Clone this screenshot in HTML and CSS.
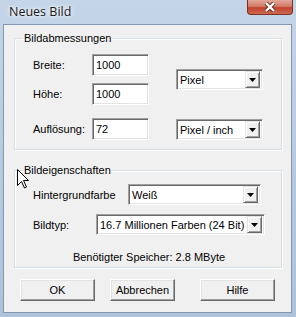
FILE: index.html
```html
<!DOCTYPE html>
<html lang="de">
<head>
    <meta charset="UTF-8">
    <title>Neues Bild</title>
    <link rel="stylesheet" href="styles.css">
</head>
<body>

<div class="titlebar">
    <span class="title">Neues Bild</span>
    <div class="close">
        <svg width="12" height="10" viewBox="0 0 12 10">
            <path d="M2 1 L10 9 M10 1 L2 9" stroke="#5a2a22" stroke-width="4"/>
            <path d="M2 1 L10 9 M10 1 L2 9" stroke="#fff" stroke-width="2.4"/>
        </svg>
    </div>
</div>

<div class="client">
    <fieldset class="group dims">
        <legend>Bildabmessungen</legend>
        <div class="block">
            <div class="pairs">
                <label>Breite:</label>
                <div class="field">1000</div>
                <label>Höhe:</label>
                <div class="field">1000</div>
            </div>
            <div class="combo unit">
                <span class="combo-text">Pixel</span>
                <span class="combo-btn"><svg width="7" height="4"><polygon points="0,0 7,0 3.5,4" fill="#000"/></svg></span>
            </div>
        </div>
        <div class="block last">
            <div class="pairs">
                <label>Auflösung:</label>
                <div class="field">72</div>
            </div>
            <div class="combo unit">
                <span class="combo-text">Pixel / inch</span>
                <span class="combo-btn"><svg width="7" height="4"><polygon points="0,0 7,0 3.5,4" fill="#000"/></svg></span>
            </div>
        </div>
    </fieldset>

    <fieldset class="group props">
        <legend>Bildeigenschaften</legend>
        <div class="row">
            <label>Hintergrundfarbe</label>
            <div class="combo color">
                <span class="combo-text">Weiß</span>
                <span class="combo-btn"><svg width="7" height="4"><polygon points="0,0 7,0 3.5,4" fill="#000"/></svg></span>
            </div>
        </div>
        <div class="row">
            <label>Bildtyp:</label>
            <div class="combo type">
                <span class="combo-text">16.7 Millionen Farben (24 Bit)</span>
                <span class="combo-btn"><svg width="7" height="4"><polygon points="0,0 7,0 3.5,4" fill="#000"/></svg></span>
            </div>
        </div>
        <p class="memory">Benötigter Speicher: 2.8 MByte</p>
    </fieldset>

    <div class="buttons">
        <button class="btn">OK</button>
        <button class="btn narrow">Abbrechen</button>
        <button class="btn">Hilfe</button>
    </div>

    <!-- Mauszeiger -->
    <svg class="cursor" width="13" height="20" viewBox="0 0 13 20">
        <polygon points="0.5,0.5 0.5,16.5 4.5,12.5 7.5,19 9.5,18 6.5,11.5 11.5,11.5" fill="#fff" stroke="#000" stroke-width="1"/>
    </svg>
</div>

</body>
</html>
```

FILE: styles.css
```css
body {
    margin: 0;
    width: 296px;
    height: 317px;
    overflow: hidden;
    font-family: "Liberation Sans", Arial, sans-serif;
    font-size: 11px;
    color: #000;
    background: linear-gradient(to bottom, #c4d5e8, #b4c8de 60%, #aec3da);
}
.titlebar {
    height: 24px;
    display: flex;
    align-items: flex-start;
}
.title {
    padding-left: 9px;
    line-height: 23px;
    font-family: "Open Sans", "Noto Sans", sans-serif;
    font-size: 12.5px;
    color: #1a1a1a;
    text-shadow: 0 0 6px #fff, 0 0 3px #fff;
}
.close {
    margin-left: auto;
    margin-right: 3px;
    width: 46px;
    height: 15px;
    box-sizing: border-box;
    border: 1px solid #7c3026;
    border-top: none;
    border-radius: 0 0 4px 4px;
    background: linear-gradient(to bottom, #e4a898, #d27a66 45%, #c2422e 55%, #cd6a4f);
    display: flex;
    align-items: center;
    justify-content: center;
}
.client {
    position: relative;
    margin-left: 3px;
    width: 289px;
    height: 289px;
    box-sizing: border-box;
    border: 1px solid #8497ad;
    background-color: #f0f0f0;
    padding-top: 7px;
}
.group {
    margin: 0 0 0 10px;
    width: 268px;
    box-sizing: border-box;
    border: 1px solid #d5dfe5;
    box-shadow: inset 1px 1px #fff, 1px 1px #fff;
    padding: 0 16px 0 18px;
}
.group legend {
    margin-left: -10px;
    padding: 0 1px;
    line-height: 13px;
}
.dims {
    height: 118px;
    padding-top: 9px;
}
.block {
    display: flex;
    align-items: center;
}
.block.last {
    margin-top: 13px;
    align-items: flex-end;
}
.pairs {
    display: grid;
    grid-template-columns: 59px 57px;
    row-gap: 7px;
    align-items: center;
}
.field {
    height: 22px;
    box-sizing: border-box;
    border: 1px solid;
    border-color: #a0a0a0 #fff #fff #a0a0a0;
    box-shadow: inset 1px 1px #696969, inset -1px -1px #e3e3e3;
    background-color: #fff;
    padding: 2px 0 0 3px;
    line-height: 16px;
}
.combo {
    height: 21px;
    box-sizing: border-box;
    border: 1px solid;
    border-color: #a0a0a0 #fff #fff #a0a0a0;
    box-shadow: inset 1px 1px #696969, inset -1px -1px #e3e3e3;
    background-color: #fff;
    display: flex;
    align-items: center;
    padding: 2px;
}
.combo-text {
    flex: 1;
    padding-left: 1px;
    white-space: nowrap;
    overflow: hidden;
}
.combo-btn {
    width: 15px;
    height: 17px;
    box-sizing: border-box;
    border: 1px solid;
    border-color: #e3e3e3 #696969 #696969 #e3e3e3;
    box-shadow: inset 1px 1px #fff, inset -1px -1px #a0a0a0;
    background-color: #f0f0f0;
    display: flex;
    align-items: center;
    justify-content: center;
}
.unit {
    width: 87px;
    margin-left: 27px;
}
.props {
    margin-top: 14px;
    height: 104px;
    padding-top: 7px;
}
.row {
    display: flex;
    align-items: center;
    justify-content: space-between;
    margin-bottom: 9px;
}
.color {
    width: 133px;
    margin-right: 4px;
}
.type {
    width: 169px;
}
.memory {
    margin: 16px 0 0;
    text-align: center;
    line-height: 13px;
}
.buttons {
    display: flex;
    padding: 11px 0 0 16px;
}
.btn {
    width: 75px;
    height: 22px;
    margin-right: 15px;
    box-sizing: border-box;
    font-family: "Liberation Sans", Arial, sans-serif;
    font-size: 11px;
    color: #000;
    background-color: #f0f0f0;
    border: 1px solid;
    border-color: #fff #696969 #696969 #fff;
    box-shadow: inset -1px -1px #a0a0a0, inset 1px 1px #e3e3e3;
    padding: 0;
}
.btn.narrow {
    width: 65px;
    margin-right: 25px;
}
.cursor {
    position: absolute;
    left: 13px;
    top: 144px;
}
```
